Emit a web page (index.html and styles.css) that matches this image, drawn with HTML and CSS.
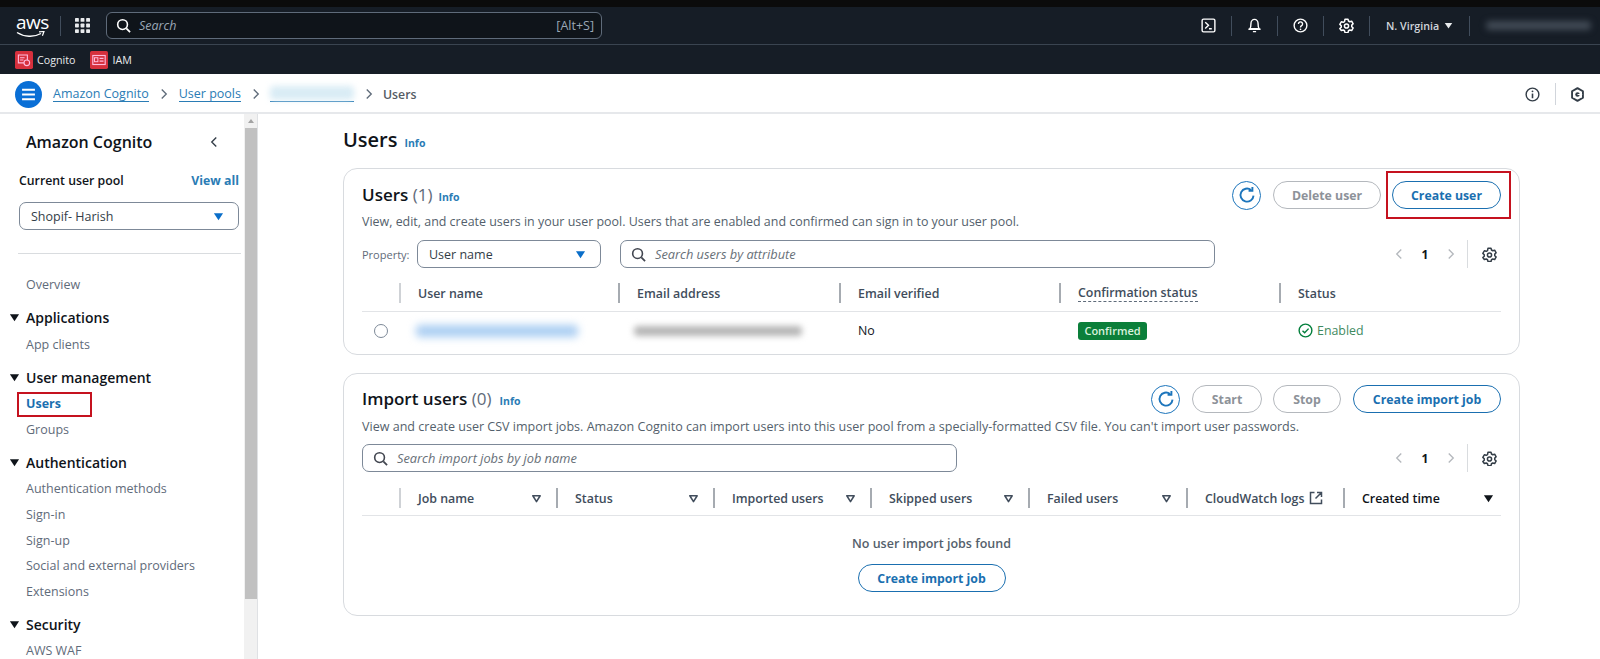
FILE: index.html
```html
<!DOCTYPE html>
<html lang="en">
<head>
<meta charset="utf-8">
<title>Users - Amazon Cognito</title>
<link rel="stylesheet" href="styles.css">
</head>
<body>
<svg class="defs" width="0" height="0" aria-hidden="true">
  <symbol id="gear" viewBox="0 0 16 16"><path fill="none" stroke="currentColor" stroke-width="1.6" stroke-linejoin="round" d="M6.4 1.2h3.2l.5 2 1.4.8 2-.6 1.6 2.8-1.5 1.4v1.6l1.5 1.4-1.6 2.8-2-.6-1.4.8-.5 2H6.400l-.5-2-1.4-.8-2 .6L.9 11.200l1.500-1.400V8.200L.9 6.800l1.600-2.800 2 .6 1.400-.8z"/><circle cx="8" cy="8.500" r="2.200" fill="none" stroke="currentColor" stroke-width="1.600"/></symbol>
  <symbol id="search" viewBox="0 0 16 16"><circle cx="7" cy="7" r="5.200" fill="none" stroke="currentColor" stroke-width="1.700"/><path d="M11 11l4 4" stroke="currentColor" stroke-width="1.900" fill="none"/></symbol>
  <symbol id="refresh" viewBox="0 0 16 16"><path fill="none" stroke="currentColor" stroke-width="1.700" d="M13.800 8.500A5.800 5.800 0 1 1 11.600 3.500"/><path fill="none" stroke="currentColor" stroke-width="1.700" d="M12.800 .8v3.400H9.400"/></symbol>
  <symbol id="chev-l" viewBox="0 0 16 16"><path fill="none" stroke="currentColor" stroke-width="1.800" d="M11 2L5 8l6 6"/></symbol>
  <symbol id="chev-r" viewBox="0 0 16 16"><path fill="none" stroke="currentColor" stroke-width="1.800" d="M5 2l6 6-6 6"/></symbol>
  <symbol id="caret" viewBox="0 0 12 12"><path fill="currentColor" d="M1 2.500h10L6 10z"/></symbol>
  <symbol id="caret-open" viewBox="0 0 12 12"><path fill="none" stroke="currentColor" stroke-width="1.700" stroke-linejoin="round" d="M2 3h8L6 9.500z"/></symbol>
</svg>

<div class="blackstrip"></div>

<header class="topnav">
  <div class="logo">
    <span class="logo-text">aws</span>
    <svg class="logo-swoosh" viewBox="0 0 29 7"><path d="M1 1.500c7 4.500 17 5 24 1" fill="none" stroke="#fff" stroke-width="1.400"/><path d="M23 .9l5-.4-1.600 4.200" fill="none" stroke="#fff" stroke-width="1.200"/></svg>
  </div>
  <span class="nav-sep nav-sep-logo"></span>
  <svg class="apps" viewBox="0 0 14 14"><g fill="#e9ebed"><rect width="3.600" height="3.600" rx=".6"/><rect x="5.200" width="3.600" height="3.600" rx=".6"/><rect x="10.400" width="3.600" height="3.600" rx=".6"/><rect y="5.200" width="3.600" height="3.600" rx=".6"/><rect x="5.200" y="5.200" width="3.600" height="3.600" rx=".6"/><rect x="10.400" y="5.200" width="3.600" height="3.600" rx=".6"/><rect y="10.400" width="3.600" height="3.600" rx=".6"/><rect x="5.200" y="10.400" width="3.600" height="3.600" rx=".6"/><rect x="10.400" y="10.400" width="3.600" height="3.600" rx=".6"/></g></svg>
  <div class="nav-search">
    <svg class="ico15"><use href="#search"/></svg>
    <span class="nav-search-text">Search</span>
    <span class="nav-search-key">[Alt+S]</span>
  </div>
  <div class="nav-right">
    <svg class="nav-ico" viewBox="0 0 16 16"><rect x="1.200" y="1.200" width="13.600" height="13.600" rx="1.500" fill="none" stroke="#fff" stroke-width="1.500"/><path d="M4.500 4.500L8 7.800l-3.500 3.300M8.500 11.500h3" fill="none" stroke="#fff" stroke-width="1.500"/></svg>
    <span class="nav-sep"></span>
    <svg class="nav-ico" viewBox="0 0 16 16"><path d="M3 11.500c1-1 1.200-2.500 1.200-5.500a3.800 4.500 0 0 1 7.600 0c0 3 .2 4.500 1.200 5.500z" fill="none" stroke="#fff" stroke-width="1.500" stroke-linejoin="round"/><path d="M1.500 12h13M6.300 14.500h3.400" stroke="#fff" stroke-width="1.500"/></svg>
    <span class="nav-sep"></span>
    <svg class="nav-ico" viewBox="0 0 16 16"><circle cx="8" cy="8" r="6.800" fill="none" stroke="#fff" stroke-width="1.500"/><path d="M5.800 6.300a2.200 2.200 0 1 1 3.400 1.900c-.8.500-1.200 1-1.200 1.800" fill="none" stroke="#fff" stroke-width="1.500"/><circle cx="8" cy="12" r=".9" fill="#fff"/></svg>
    <span class="nav-sep"></span>
    <svg class="nav-ico"><use href="#gear"/></svg>
    <span class="nav-sep"></span>
    <span class="region">N. Virginia</span>
    <svg class="region-caret"><use href="#caret"/></svg>
    <span class="nav-sep nav-sep-acct"></span>
    <span class="blur blur-acct"></span>
  </div>
</header>

<div class="favbar">
  <span class="fav"><svg class="fav-ico" viewBox="0 0 16 16"><rect width="16" height="16" rx="1.500" fill="#d6303d"/><path d="M3 3.500h8v7H3z" fill="none" stroke="#fbd" stroke-width="1"/><path d="M4.500 6h4M4.500 8h3" stroke="#fbd" stroke-width="1"/><circle cx="10.500" cy="10.500" r="2.500" fill="#d6303d" stroke="#fbd"/></svg>Cognito</span>
  <span class="fav"><svg class="fav-ico" viewBox="0 0 16 16"><rect width="16" height="16" rx="1.500" fill="#d6303d"/><rect x="2.500" y="4" width="11" height="8" fill="none" stroke="#fbd" stroke-width="1"/><rect x="4" y="6" width="3" height="3.500" fill="none" stroke="#fbd" stroke-width=".9"/><path d="M8.500 6.500h3.500M8.500 9h3.500" stroke="#fbd" stroke-width="1"/></svg>IAM</span>
</div>

<div class="crumbbar">
  <span class="menu-btn"><svg viewBox="0 0 14 12" class="menu-ico"><path d="M1 1.500h12M1 6h12M1 10.500h12" stroke="#fff" stroke-width="1.900"/></svg></span>
  <a class="crumb">Amazon Cognito</a>
  <svg class="crumb-chev"><use href="#chev-r"/></svg>
  <a class="crumb">User pools</a>
  <svg class="crumb-chev"><use href="#chev-r"/></svg>
  <a class="crumb crumb-blur"><span class="blur blur-pool"></span></a>
  <svg class="crumb-chev"><use href="#chev-r"/></svg>
  <span class="crumb-cur">Users</span>
  <div class="crumb-right">
    <svg class="crumb-ico" viewBox="0 0 16 16"><circle cx="8" cy="8" r="6.800" fill="none" stroke="#333d47" stroke-width="1.500"/><path d="M8 7v5" stroke="#333d47" stroke-width="1.700"/><circle cx="8" cy="4.600" r="1" fill="#333d47"/></svg>
    <span class="crumb-sep"></span>
    <svg class="crumb-ico" viewBox="0 0 16 16"><path d="M8 1.200l5.800 3.400v6.800L8 14.800l-5.800-3.400V4.600z" fill="none" stroke="#333d47" stroke-width="2" stroke-linejoin="round"/><circle cx="8" cy="8" r="2.400" fill="#333d47"/><path d="M8 8h5" stroke="#fff" stroke-width="1.100"/></svg>
  </div>
</div>

<div class="layout">
  <aside class="sidebar">
    <div class="side-inner">
      <div class="side-title-row">
        <span class="side-title">Amazon Cognito</span>
        <svg class="side-close"><use href="#chev-l"/></svg>
      </div>
      <div class="pool-row"><span class="pool-label">Current user pool</span><a class="pool-link">View all</a></div>
      <div class="select pool-select"><span>Shopif- Harish</span><svg class="select-caret"><use href="#caret"/></svg></div>
      <hr class="side-rule">
      <a class="side-item side-first">Overview</a>
      <div class="side-head"><svg class="side-caret"><use href="#caret"/></svg>Applications</div>
      <a class="side-item">App clients</a>
      <div class="side-head"><svg class="side-caret"><use href="#caret"/></svg>User management</div>
      <a class="side-item side-active">Users<span class="redbox redbox-side"></span></a>
      <a class="side-item">Groups</a>
      <div class="side-head"><svg class="side-caret"><use href="#caret"/></svg>Authentication</div>
      <a class="side-item">Authentication methods</a>
      <a class="side-item">Sign-in</a>
      <a class="side-item">Sign-up</a>
      <a class="side-item">Social and external providers</a>
      <a class="side-item">Extensions</a>
      <div class="side-head"><svg class="side-caret"><use href="#caret"/></svg>Security</div>
      <a class="side-item">AWS WAF</a>
    </div>
    <div class="scrollbar"><span class="scroll-arrow"></span><span class="scroll-thumb"></span></div>
  </aside>

  <main class="content">
    <div class="page-title"><h1>Users</h1><a class="info">Info</a></div>

    <section class="card card-users">
      <div class="card-head">
        <h2>Users <span class="count">(1)</span></h2><a class="info info-h2">Info</a>
        <div class="actions">
          <span class="round-btn"><svg class="ico18"><use href="#refresh"/></svg></span>
          <button class="btn btn-off btn-delete">Delete user</button>
          <span class="red-wrap"><button class="btn btn-create-user">Create user</button><span class="redbox redbox-create"></span></span>
        </div>
      </div>
      <p class="desc">View, edit, and create users in your user pool. Users that are enabled and confirmed can sign in to your user pool.</p>
      <div class="tools">
        <span class="prop-label">Property:</span>
        <div class="select prop-select"><span>User name</span><svg class="select-caret"><use href="#caret"/></svg></div>
        <div class="searchbox users-search"><svg class="ico15 dark"><use href="#search"/></svg><span>Search users by attribute</span></div>
        <div class="pager">
          <svg class="pg-chev"><use href="#chev-l"/></svg><b>1</b><svg class="pg-chev"><use href="#chev-r"/></svg>
          <span class="pg-sep"></span>
          <svg class="pg-gear"><use href="#gear"/></svg>
        </div>
      </div>
      <div class="thead users-grid">
        <span class="th"><span class="vline"></span></span>
        <span class="th"><span class="vline"></span>User name</span>
        <span class="th"><span class="vline"></span>Email address</span>
        <span class="th"><span class="vline"></span>Email verified</span>
        <span class="th"><span class="vline"></span><span class="dotted">Confirmation status</span></span>
        <span class="th"><span class="vline"></span>Status</span>
      </div>
      <div class="trow users-grid">
        <span class="radio"></span>
        <span class="td"><span class="blur blur-user"></span></span>
        <span class="td"><span class="blur blur-mail"></span></span>
        <span class="td td-no">No</span>
        <span class="td"><span class="badge">Confirmed</span></span>
        <span class="td td-ok"><svg class="ok-ico" viewBox="0 0 16 16"><circle cx="8" cy="8" r="6.800" fill="none" stroke="#037f3c" stroke-width="1.500"/><path d="M4.800 8.200l2.300 2.300 4.200-4.500" fill="none" stroke="#037f3c" stroke-width="1.500"/></svg>Enabled</span>
      </div>
    </section>

    <section class="card card-import">
      <div class="card-head">
        <h2>Import users <span class="count">(0)</span></h2><a class="info info-h2">Info</a>
        <div class="actions">
          <span class="round-btn"><svg class="ico18"><use href="#refresh"/></svg></span>
          <button class="btn btn-off btn-start">Start</button>
          <button class="btn btn-off btn-stop">Stop</button>
          <button class="btn btn-job">Create import job</button>
        </div>
      </div>
      <p class="desc">View and create user CSV import jobs. Amazon Cognito can import users into this user pool from a specially-formatted CSV file. You can't import user passwords.</p>
      <div class="tools tools-import">
        <div class="searchbox import-search"><svg class="ico15 dark"><use href="#search"/></svg><span>Search import jobs by job name</span></div>
        <div class="pager">
          <svg class="pg-chev"><use href="#chev-l"/></svg><b>1</b><svg class="pg-chev"><use href="#chev-r"/></svg>
          <span class="pg-sep"></span>
          <svg class="pg-gear"><use href="#gear"/></svg>
        </div>
      </div>
      <div class="thead import-grid">
        <span class="th"><span class="vline"></span></span>
        <span class="th"><span class="vline"></span>Job name<svg class="sort"><use href="#caret-open"/></svg></span>
        <span class="th"><span class="vline"></span>Status<svg class="sort"><use href="#caret-open"/></svg></span>
        <span class="th"><span class="vline"></span>Imported users<svg class="sort"><use href="#caret-open"/></svg></span>
        <span class="th"><span class="vline"></span>Skipped users<svg class="sort"><use href="#caret-open"/></svg></span>
        <span class="th"><span class="vline"></span>Failed users<svg class="sort"><use href="#caret-open"/></svg></span>
        <span class="th"><span class="vline"></span>CloudWatch logs<svg class="ext" viewBox="0 0 14 14"><path d="M5.500 1.500h-4v11h11v-4M8 1.500h4.500V6M12.500 1.500L6.500 7.500" fill="none" stroke="currentColor" stroke-width="1.500"/></svg></span>
        <span class="th th-sorted"><span class="vline"></span>Created time<svg class="sort"><use href="#caret"/></svg></span>
      </div>
      <div class="empty">
        <strong>No user import jobs found</strong>
        <button class="btn btn-job btn-empty">Create import job</button>
      </div>
    </section>
  </main>
</div>
</body>
</html>
```

FILE: styles.css
```css
* { box-sizing: border-box; }
html, body { margin: 0; padding: 0; height: 659px; overflow: hidden; background: #fff; }
body { font-family: "Open Sans", "Noto Sans", sans-serif; font-size: 12.5px; color: #0f141a; }
.defs { position: absolute; }
svg { display: block; flex: none; }
a { color: inherit; text-decoration: none; }
h1, h2, p { margin: 0; }

.blackstrip { height: 7px; background: #0b0b0b; }

/* top navigation */
.topnav { height: 38px; background: #161d26; border-bottom: 1px solid #3a4450; display: flex; align-items: center; padding-left: 16px; color: #e9ebed; }
.logo { width: 29px; height: 28px; position: relative; }
.logo-text { display: block; color: #fff; font-size: 19px; line-height: 20px; text-align: center; letter-spacing: -.5px; }
.logo-swoosh { width: 29px; height: 7px; position: absolute; left: 0; top: 19px; }
.nav-sep { width: 1px; height: 20px; background: #414d5c; flex: none; }
.nav-sep-logo { margin-left: 15px; }
.apps { width: 15px; height: 15px; margin-left: 14px; }
.nav-search { width: 496px; height: 27px; margin-left: 16px; border: 1.500px solid #5f6b7a; border-radius: 6px; background: #0f141a; display: flex; align-items: center; padding: 0 7px 0 9px; color: #fff; }
.nav-search-text { margin-left: 8px; font-style: italic; color: #9ba7b6; font-size: 12.500px; }
.nav-search-key { margin-left: auto; color: #9ba7b6; font-size: 12.500px; }
.ico15 { width: 15px; height: 15px; }
.ico18 { width: 18px; height: 18px; }
.dark { color: #424650; }
.nav-right { margin-left: auto; display: flex; align-items: center; color: #fff; }
.nav-ico { width: 15px; height: 15px; margin: 0 15px; color: #fff; }
.region { margin-left: 16px; width: 52px; font-size: 10.700px; font-weight: 600; color: #d1d5db; white-space: nowrap; }
.region-caret { width: 9px; height: 9px; margin: 0 16px 0 6px; color: #e9ebed; }
.blur { display: block; filter: blur(3px); border-radius: 4px; }
.blur-acct { width: 105px; height: 9px; margin: 0 9px 0 16px; background: #414a55; }

/* favorites */
.favbar { height: 29px; background: #161d26; display: flex; align-items: center; padding-left: 15px; gap: 15px; }
.fav { display: flex; align-items: center; gap: 4px; color: #e9ebed; font-size: 10.700px; font-weight: 500; }
.fav-ico { width: 18px; height: 18px; }

/* breadcrumbs */
.crumbbar { height: 40px; background: #fff; border-bottom: 2px solid #e6e8eb; display: flex; align-items: center; padding: 2px 0 0 15px; font-size: 12.500px; }
.menu-btn { width: 27px; height: 27px; border-radius: 50%; background: #0a6fd6; display: flex; align-items: center; justify-content: center; }
.menu-ico { width: 15px; height: 13px; }
.crumb { color: #2a7cb5; border-bottom: 1px solid #2a7cb5; line-height: 15px; }
.menu-btn + .crumb { margin-left: 11px; }
.crumb-chev { width: 12px; height: 12px; margin: 0 9px; color: #5f6b7a; }
.crumb-blur { width: 84px; height: 16px; margin: 0 0 0 -1px; }
.blur-pool { width: 84px; height: 14px; background: #d9ecf5; }
.crumb-cur { margin-left: -1px; color: #545b64; font-weight: 600; font-size: 12.300px; }
.crumb-right { margin-left: auto; display: flex; align-items: center; }
.crumb-ico { width: 15px; height: 15px; margin: 0 15px 0 14px; }
.crumb-sep { width: 1px; height: 22px; background: #d1d5db; }

/* layout */
.layout { height: 545px; display: flex; overflow: hidden; }
.sidebar { width: 258px; flex: none; border-right: 1px solid #dfe1e4; display: flex; overflow: hidden; }
.side-inner { width: 244px; flex: none; padding: 16px 0 0 0; }
.side-title-row { display: flex; align-items: center; height: 24px; padding-left: 26px; }
.side-title { font-size: 16px; font-weight: 600; white-space: nowrap; }
.side-close { width: 12px; height: 12px; margin-left: 56px; color: #333d47; }
.pool-row { display: flex; justify-content: space-between; padding: 0 5px 0 19px; margin-top: 18px; font-weight: 600; font-size: 12.300px; line-height: 18px; }
.pool-link { color: #2a7cb5; font-weight: 700; }
.select { border: 1.500px solid #7d8998; border-radius: 7px; display: flex; align-items: center; justify-content: space-between; background: #fff; color: #333d47; font-size: 12.500px; padding: 0 14px 0 11px; }
.pool-select { width: 220px; height: 28px; margin: 12px 0 0 19px; }
.select-caret { width: 11px; height: 11px; color: #0a6ec9; }
.side-rule { border: 0; border-top: 1px solid #d9dcdf; margin: 23px 3px 0 18px; }
.side-item { display: block; position: relative; height: 25.600px; line-height: 25.600px; padding-left: 26px; color: #5f6b7a; font-size: 12.500px; white-space: nowrap; }
.side-first { margin-top: 18px; }
.side-active { color: #1a6fb0; font-weight: 700; }
.side-head { display: flex; align-items: center; height: 26px; margin: 7px 0 1px; font-size: 14px; font-weight: 600; color: #0f141a; padding-left: 9px; gap: 6px; }
.side-caret { width: 11px; height: 11px; color: #0f141a; }
.redbox { position: absolute; border: 2px solid #c5121f; pointer-events: none; }
.redbox-side { left: 17px; top: 1px; width: 75px; height: 25px; }
.scrollbar { width: 13px; flex: none; background: #f1f1f1; display: flex; flex-direction: column; align-items: center; }
.scroll-arrow { width: 0; height: 0; margin: 5px 0 5px; border: 3px solid transparent; border-top: 0; border-bottom: 4px solid #a3a3a3; }
.scroll-thumb { width: 12px; height: 471px; background: #c1c1c1; }

/* content */
.content { flex: 1; padding: 9px 80px 0 85px; min-width: 0; }
.page-title { display: flex; align-items: baseline; gap: 7px; height: 34px; }
.page-title h1 { font-size: 20px; font-weight: 600; line-height: 33px; }
.info { color: #2a7cb5; font-size: 10.500px; font-weight: 700; }
.card { border: 1px solid #d8dbdf; border-radius: 14px; padding: 12px 18px 0; background: #fff; margin-top: 11px; }
.card-import { margin-top: 18px; padding-top: 11px; height: 243px; }
.card-users { height: 187px; }
.card-head { display: flex; align-items: center; height: 28px; }
.card-head h2 { font-size: 17px; font-weight: 600; line-height: 28px; }
.count { font-weight: 400; color: #5f6b7a; }
.info-h2 { margin: 3px 0 0 6px; }
.card-import .info-h2 { margin-left: 8px; }
.actions { margin-left: auto; display: flex; align-items: center; }
.round-btn { width: 29px; height: 29px; border-radius: 50%; border: 1.800px solid #1c75bc; color: #1c75bc; display: flex; align-items: center; justify-content: center; }
.btn { font: 700 12.300px "Open Sans", "Noto Sans", sans-serif; height: 28px; border-radius: 14px; background: #fff; padding: 0; display: block; }
.btn-off { border: 1.500px solid #b4b8bd; color: #8d9299; }
.btn-delete { width: 108px; margin-left: 12px; }
.red-wrap { position: relative; margin-left: 11px; display: block; }
.btn-create-user, .btn-job { border: 1.500px solid #1a6fb0; color: #1a6fb0; }
.btn-create-user { width: 109px; }
.redbox-create { left: -6px; top: -10px; width: 125px; height: 48px; }
.btn-start { width: 70px; margin-left: 12px; }
.btn-stop { width: 68px; margin-left: 11px; }
.btn-job { width: 148px; margin-left: 12px; }
.desc { margin-top: 4px; line-height: 18px; color: #545f6c; font-size: 12.450px; white-space: nowrap; }
.card-import .desc { margin-top: 5px; font-size: 12.550px; }
.tools { display: flex; align-items: center; margin-top: 9px; height: 28px; }
.tools-import { margin-top: 8px; }
.prop-label { width: 55px; flex: none; font-size: 11px; color: #5f6b7a; }
.prop-select { width: 184px; height: 28px; }
.searchbox { height: 28px; border: 1.500px solid #7d8998; border-radius: 7px; display: flex; align-items: center; gap: 9px; padding-left: 10px; color: #687078; font-style: italic; font-size: 12.800px; }
.users-search { width: 595px; margin-left: 19px; }
.import-search { width: 595px; }
.pager { margin-left: auto; display: flex; align-items: center; height: 28px; color: #0f141a; }
.pager b { width: 36px; text-align: center; font-size: 12px; }
.pg-chev { width: 12px; height: 12px; color: #b4b8bd; margin: 0 2px; }
.pg-sep { width: 1px; height: 28px; background: #d9dcdf; margin-left: 8px; }
.pg-gear { width: 15px; height: 15px; margin: 0 4px 0 14px; color: #333d47; }

.thead { display: grid; height: 29px; margin-top: 15px; padding-bottom: 9px; border-bottom: 1.500px solid #e2e4e7; }
.card-import .thead { margin-top: 16px; height: 28px; padding-bottom: 8px; }
.users-grid { grid-template-columns: 37px 219px 221px 220px 220px 1fr; }
.import-grid { grid-template-columns: 37px 157px 157px 157px 158px 158px 157px 1fr; }
.th { display: flex; align-items: center; height: 20px; font-size: 12.400px; font-weight: 600; color: #414d5c; padding-left: 19px; padding-right: 14px; position: relative; white-space: nowrap; }
.th:first-child { padding: 0; }
.vline { position: absolute; left: 0; top: 0; width: 2px; height: 20px; background: #a6abb1; }
.th:first-child .vline { left: 37px; background: #cfd2d6; }
.th:nth-child(2) .vline { background: #cfd2d6; }
.dotted { border-bottom: 1px dashed #5f6b7a; line-height: 17px; }
.sort { width: 11px; height: 11px; margin-left: auto; color: #414d5c; }
.th-sorted { color: #0f141a; padding-right: 7px; }
.th-sorted .sort { color: #0f141a; }
.ext { width: 14px; height: 14px; margin-left: 5px; color: #414d5c; }
.trow { height: 41px; align-items: center; display: grid; padding-bottom: 4px; }
.radio { width: 14px; height: 14px; border-radius: 50%; border: 1.500px solid #7d8998; margin-left: 12px; }
.td { padding-left: 19px; font-size: 12.400px; color: #0f141a; display: block; }
.blur-user { width: 162px; height: 12px; margin-left: -2px; background: #a9cdf2; filter: blur(4px); }
.blur-mail { width: 168px; height: 10px; margin-left: -3px; background: #b5b5b5; }
.badge { display: inline-block; background: #0b7f3a; color: #d9f2df; font-size: 11px; font-weight: 600; line-height: 18px; height: 18px; width: 69px; border-radius: 3px; text-align: center; }
.td-ok { display: flex; align-items: center; gap: 4px; color: #3f8a5f; font-size: 12.400px; }
.ok-ico { width: 15px; height: 15px; }

.empty { display: flex; flex-direction: column; align-items: center; padding-top: 19px; }
.empty strong { font-size: 12.500px; font-weight: 600; color: #545f6c; line-height: 18px; }
.btn-empty { margin: 11px 0 0; }
```
